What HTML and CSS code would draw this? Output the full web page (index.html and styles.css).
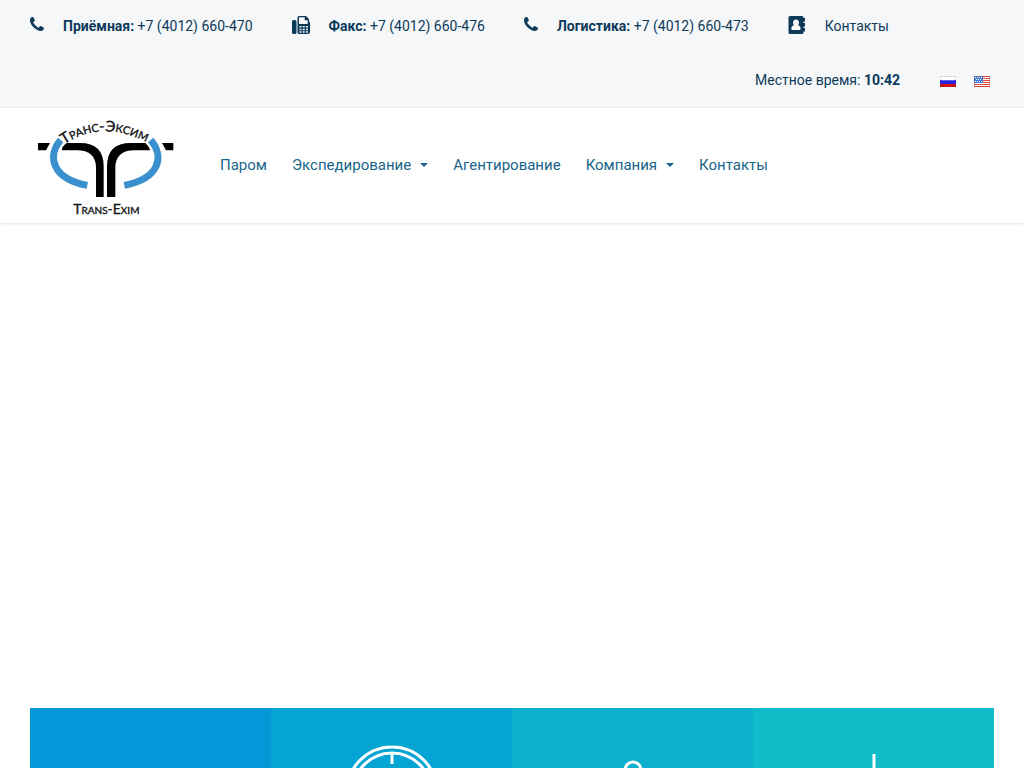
FILE: index.html
```html
<!DOCTYPE html>
<html lang="ru">
<head>
<meta charset="utf-8">
<meta name="viewport" content="width=device-width, initial-scale=1">
<title>Транс-Эксим</title>
<link rel="stylesheet" href="styles.css">
</head>
<body>
<svg class="sprite" aria-hidden="true">
  <symbol id="phone" viewBox="0 0 14 14"><path d="M14 11c0 .4-.2 1.300-.4 1.600-.3.7-1.800 1.400-2.600 1.400-3 0-6.100-2.400-8-4.300S0 5.200 0 3C0 2 .7.700 1.400.3 1.800.1 2.600 0 3 0c.4 0 .8 1.100 1 1.500.3.600.9 1.500.9 1.900 0 .8-1.700 1.400-1.700 2.100 0 .8 4.500 5.300 5.300 5.300.7 0 1.300-1.700 2.100-1.700.4 0 1.300.6 1.900.9.4.2 1.500.7 1.500 1z"/></symbol>
  <symbol id="fax" viewBox="0 0 18 18"><path fill-rule="evenodd" d="M1.500 4H3q1.500 0 1.500 1.500v11Q4.500 18 3 18H1.500Q0 18 0 16.500v-11Q0 4 1.500 4zM7 0h7l3 3v2.200q1 .5 1 1.800v9q0 2-2 2H7q-1.500 0-1.500-1.500v-15Q5.500 0 7 0zM7 1.300V8h8.700V4.300h-3v-3zM7.500 10v1.500h2V10zm3.200 0v1.500h2V10zm3.200 0v1.500h2V10zM7.500 12.700v1.500h2v-1.500zm3.200 0v1.500h2v-1.500zm3.200 0v1.500h2v-1.500zM7.500 15.300v1.400h2v-1.400zm3.200 0v1.400h2v-1.400zm3.200 0v1.400h2v-1.400z"/></symbol>
  <symbol id="book" viewBox="0 0 18 18"><path fill-rule="evenodd" d="M2 0h12q1.500 0 1.500 1.500V2H17v3.500h-1.500V7H17v3.500h-1.500V12H17v3.500h-1.500v1Q15.500 18 14 18H2q-1.500 0-1.500-1.500v-15Q.5 0 2 0zM8 3.500c-2 0-3 1.500-3 3.200 0 1 .4 1.900 1 2.500-2 .3-2.600 1.800-2.600 3.600 0 .8.4 1.200 1.200 1.200h6.800c.8 0 1.200-.4 1.200-1.200 0-1.800-.6-3.300-2.600-3.600.6-.6 1-1.500 1-2.500 0-1.700-1-3.200-3-3.200z"/></symbol>
</svg>

<div class="topbar">
  <ul class="contacts">
    <li><svg class="icon-phone"><use href="#phone"/></svg><span><b>Приёмная:</b> +7 (4012) 660-470</span></li>
    <li><svg class="icon"><use href="#fax"/></svg><span><b>Факс:</b> +7 (4012) 660-476</span></li>
    <li><svg class="icon-phone"><use href="#phone"/></svg><span><b>Логистика:</b> +7 (4012) 660-473</span></li>
    <li><svg class="icon"><use href="#book"/></svg><a href="#contacts">Контакты</a></li>
  </ul>
  <div class="local">
    <span>Местное время: <b>10:42</b></span>
    <div class="flags">
      <a href="#ru" aria-label="Русский"><svg class="flag" viewBox="0 0 16 11"><path fill="#fff" d="M0 0h16v4H0z"/><path fill="#2424e0" d="M0 4h16v4H0z"/><path fill="#e01010" d="M0 8h16v3H0z"/><path fill="#fff" opacity=".25" d="M1 4h14v1H1z"/><path fill="none" stroke="#444" stroke-opacity=".2" d="M.5.5h15v10H.5z"/></svg></a>
      <a href="#en" aria-label="English"><svg class="flag" viewBox="0 0 16 11"><path fill="#fff" d="M0 0h16v11H0z"/><path stroke="#e8503c" d="M0 .5h16M0 2.500h16M0 4.500h16M0 6.500h16M0 8.500h16M0 10.500h16"/><path fill="#3b7ddd" d="M0 0h9v7H0z"/><path stroke="#fff" stroke-dasharray="1 1" d="M1 1.500h7M2 3.500h6M1 5.500h7"/><path fill="none" stroke="#a33" stroke-opacity=".35" d="M.5.5h15v10H.5z"/></svg></a>
    </div>
  </div>
</div>

<header class="header">
  <a class="brand" href="#home" aria-label="Транс-Эксим">
    <svg class="logo" viewBox="24 24 408 300">
      <defs><path id="arc" d="M102 104Q222 22 372 108"/></defs>
      <path d="M24 99h36l-12 22H24zM396 99h34v22h-22z"/>
      <path d="M110 99h40q71 0 71 70v92h-23v-87q0-53-58-53h-44q-2-10 14-22zM346 99h-44q-71 0-71 70v92h25v-87q0-53 58-53h47q-3-12-15-22z"/>
      <g fill="none" stroke="#3990cd" stroke-width="21"><path d="M92 90C50 138 66 206 172 226"/><path d="M362 90c42 48 28 116-79 136"/></g>
      <text class="logo-text logo-arc"><textPath href="#arc">Транс-Эксим</textPath></text>
      <text class="logo-text" x="229" y="313" text-anchor="middle">Trans-Exim</text>
    </svg>
  </a>
  <nav class="nav">
    <a href="#ferry">Паром</a>
    <a class="has-menu" href="#forwarding">Экспедирование</a>
    <a href="#agency">Агентирование</a>
    <a class="has-menu" href="#company">Компания</a>
    <a href="#contacts">Контакты</a>
  </nav>
</header>

<main class="main">
  <section class="tiles">
    <div class="tile tile-1"></div>
    <div class="tile tile-2"><svg class="tile-icon" viewBox="0 0 96 60"><circle cx="48" cy="84" r="45"/><circle cx="48" cy="84" r="39"/><path d="M48 45v11"/></svg></div>
    <div class="tile tile-3"><svg class="tile-icon" viewBox="0 0 96 60"><circle cx="48" cy="62" r="8"/></svg></div>
    <div class="tile tile-4"><svg class="tile-icon" viewBox="0 0 96 60"><path d="M48 46v14"/></svg></div>
  </section>
</main>
</body>
</html>
```
FILE: styles.css
```css
* { box-sizing: border-box; }

body {
  margin: 0;
  height: 100vh;
  display: flex;
  flex-direction: column;
  overflow: hidden;
  background: #fff;
  color: #0e3a5a;
  font: 14px/24px Roboto, sans-serif;
}

a { color: inherit; text-decoration: none; }
svg { display: block; }
.sprite { display: none; }

.topbar {
  padding: 0 34px 0 30px;
  background: #f5f7f9;
  border-bottom: 1px solid #eef0f3;
}

.contacts {
  display: flex;
  flex-wrap: wrap;
  gap: 0 39px;
  margin: 0;
  padding: 14px 0 16px;
  list-style: none;
}

.contacts li { display: flex; gap: 19px; }
.contacts svg { fill: #0e3a5a; }
.icon-phone { width: 14px; height: 14px; margin-top: 3px; }
.icon { width: 18px; height: 18px; margin-top: 2px; }
b { font-weight: 700; }

.local {
  display: flex;
  justify-content: flex-end;
  align-items: center;
  gap: 40px;
  padding: 14px 0 15px;
}

.flags { display: flex; gap: 18px; padding-top: 2px; }
.flag { width: 16px; height: 11px; }

.header {
  display: flex;
  align-items: center;
  gap: 46px;
  padding: 10px 30px 5px 38px;
  border-bottom: 1px solid #ececec;
  box-shadow: 0 1px 2px rgba(0, 0, 0, 0.06);
}

.logo { width: 136px; height: 100px; overflow: visible; }
.logo-text {
  fill: #111;
  stroke: #111;
  stroke-width: 1px;
  font-family: Lato, sans-serif;
  font-size: 42px;
  font-variant: small-caps;
}
.logo-arc { font-size: 45px; }

.nav {
  display: flex;
  flex-wrap: wrap;
  gap: 0 25px;
  padding-bottom: 6px;
  color: #17658a;
  font-size: 15px;
}

.has-menu { display: flex; align-items: center; gap: 9px; }
.has-menu::after {
  content: "";
  border: 4px solid transparent;
  border-top-color: #17658a;
  border-bottom: 0;
}

.main { flex: 1; display: flex; align-items: flex-end; padding: 0 30px; }
.tiles { flex: 1; display: grid; grid-template-columns: repeat(4, 1fr); }
.tile { height: 60px; display: flex; justify-content: center; }
.tile-1 { background: #0598d8; }
.tile-2 { background: #05a4d3; }
.tile-3 { background: #0cb0cd; }
.tile-4 { background: #11bbc8; }
.tile-icon { width: 96px; height: 60px; fill: none; stroke: #fff; stroke-width: 3px; }
```
